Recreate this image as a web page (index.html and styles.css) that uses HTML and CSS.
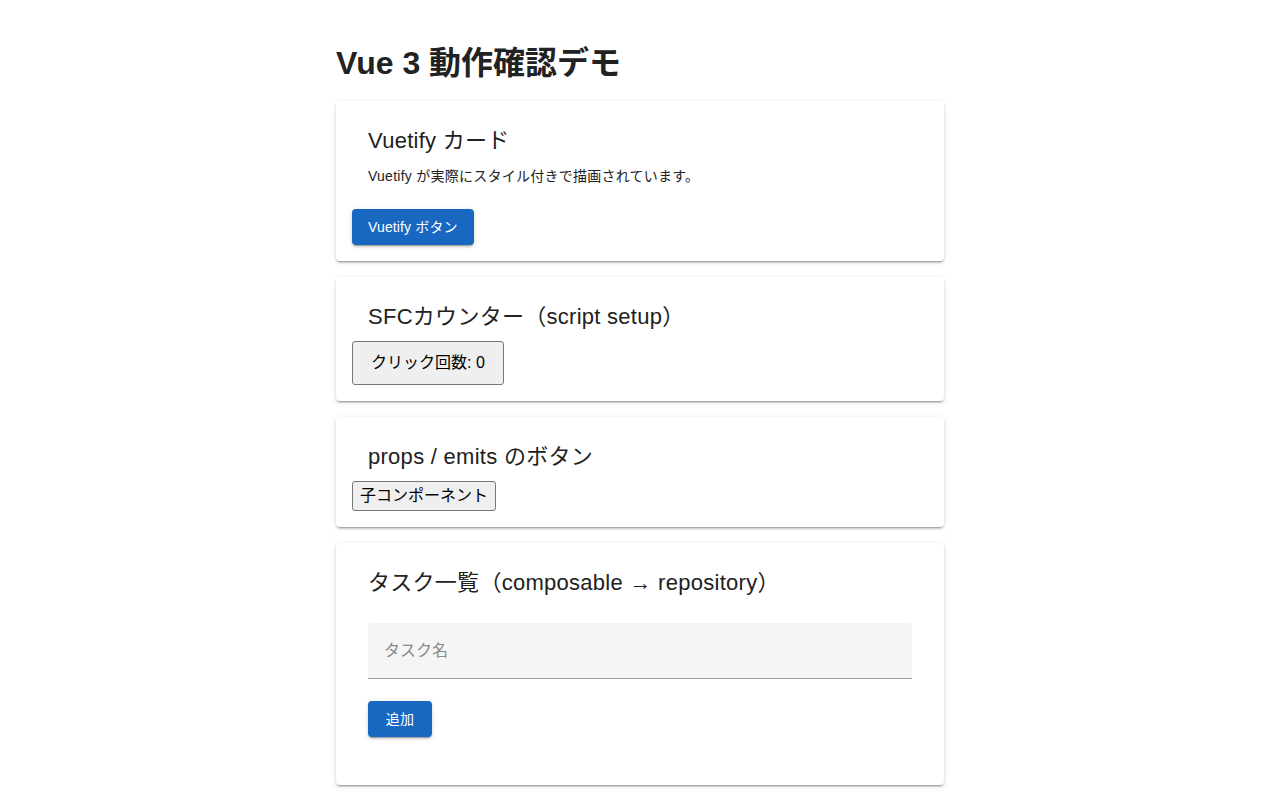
FILE: index.html
```html
<!DOCTYPE html>
<html lang="ja">
<head>
<meta charset="utf-8">
<title>Vue 3 動作確認デモ</title>
<link rel="stylesheet" href="styles.css">
</head>
<body>
<main class="app">
  <h1 class="page-title">Vue 3 動作確認デモ</h1>

  <section class="card">
    <h2 class="card-title">Vuetify カード</h2>
    <p class="card-text">Vuetify が実際にスタイル付きで描画されています。</p>
    <div class="card-actions">
      <button class="v-btn" type="button">Vuetify ボタン</button>
    </div>
  </section>

  <section class="card">
    <h2 class="card-title">SFCカウンター（script setup）</h2>
    <div class="row">
      <button class="counter-btn" type="button">クリック回数: 0</button>
    </div>
  </section>

  <section class="card">
    <h2 class="card-title">props / emits のボタン</h2>
    <div class="row">
      <button class="child-btn" type="button">子コンポーネント</button>
    </div>
  </section>

  <section class="card">
    <h2 class="card-title">タスク一覧（composable → repository）</h2>
    <form class="task-form">
      <div class="field">
        <input class="field-input" type="text" placeholder="タスク名">
      </div>
      <div class="field-details"></div>
      <div class="form-actions">
        <button class="v-btn" type="button">追加</button>
      </div>
    </form>
    <ul class="task-list"></ul>
  </section>
</main>
</body>
</html>
```

FILE: styles.css
```css
* {
  box-sizing: border-box;
}

html, body {
  margin: 0;
  padding: 0;
  background: #ffffff;
}

body {
  font-family: "Liberation Sans", Arial, "Noto Sans CJK JP", sans-serif;
  color: rgba(0, 0, 0, 0.87);
}

.app {
  width: 608px;
  margin: 0 auto;
  padding: 41px 0 16px;
  display: flex;
  flex-direction: column;
  gap: 16px;
}

.page-title {
  margin: 0;
  font-size: 32px;
  line-height: 44px;
  font-weight: 700;
  color: #222222;
}

.card {
  background: #ffffff;
  border-radius: 4px;
  padding: 16px;
  box-shadow: 0 3px 1px -2px rgba(0, 0, 0, 0.2),
              0 2px 2px 0 rgba(0, 0, 0, 0.14),
              0 1px 5px 0 rgba(0, 0, 0, 0.12);
}

.card-title {
  margin: 0;
  padding: 8px 16px;
  font-size: 22px;
  line-height: 32px;
  font-weight: 400;
  letter-spacing: 0.0125em;
  color: #212121;
}

.card-text {
  margin: 0;
  padding: 0 16px;
  font-size: 14px;
  line-height: 22px;
  letter-spacing: 0.0178571429em;
  color: #222222;
}

.card-actions {
  display: flex;
  padding-top: 22px;
}

.row {
  display: flex;
}

.v-btn {
  height: 36px;
  padding: 0 16px;
  min-width: 64px;
  border: 0;
  border-radius: 4px;
  background: #1867c0;
  color: #ffffff;
  font-family: "Liberation Sans", Arial, "Noto Sans CJK JP", sans-serif;
  font-size: 14px;
  line-height: 36px;
  letter-spacing: 0.01em;
  cursor: pointer;
  box-shadow: 0 3px 1px -2px rgba(0, 0, 0, 0.2),
              0 2px 2px 0 rgba(0, 0, 0, 0.14),
              0 1px 5px 0 rgba(0, 0, 0, 0.12);
}

.counter-btn,
.child-btn {
  background: #efefef;
  border: 1px solid #767676;
  border-radius: 3px;
  color: #000000;
  font-family: "Liberation Sans", Arial, "Noto Sans CJK JP", sans-serif;
  font-size: 16px;
  cursor: pointer;
}

.counter-btn {
  height: 44px;
  padding: 0 18px;
  line-height: 42px;
}

.child-btn {
  height: 30px;
  padding: 0 7px;
  line-height: 28px;
}

.task-form {
  padding: 16px 16px 16px;
}

.field {
  height: 56px;
  background: #f5f5f5;
  border-radius: 4px 4px 0 0;
  border-bottom: 1px solid #9e9e9e;
  display: flex;
}

.field-input {
  flex: 1;
  border: 0;
  outline: none;
  background: transparent;
  padding: 0 16px;
  font-family: "Liberation Sans", Arial, "Noto Sans CJK JP", sans-serif;
  font-size: 16px;
  color: rgba(0, 0, 0, 0.87);
}

.field-input::placeholder {
  color: #8a8a8a;
}

.field-details {
  height: 22px;
}

.form-actions {
  display: flex;
}

.task-list {
  margin: 0;
  padding: 8px 0;
  list-style: none;
}
```
